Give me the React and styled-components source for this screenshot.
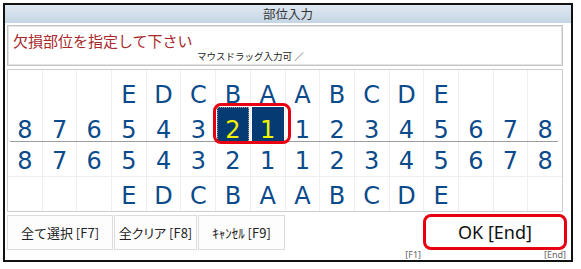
import React from 'react';
import styled, { createGlobalStyle } from 'styled-components';

const GlobalStyle = createGlobalStyle`
  html, body {
    margin: 0;
    padding: 0;
    background: #ffffff;
  }
  * {
    box-sizing: border-box;
  }
`;

const LEFT_LETTERS = ['', '', '', 'E', 'D', 'C', 'B', 'A'];
const RIGHT_LETTERS = ['A', 'B', 'C', 'D', 'E', '', '', ''];
const LEFT_NUMS = ['8', '7', '6', '5', '4', '3', '2', '1'];
const RIGHT_NUMS = ['1', '2', '3', '4', '5', '6', '7', '8'];

const rows = [
  { key: 'ul', pad: 11, height: 35, cells: [...LEFT_LETTERS, ...RIGHT_LETTERS] },
  { key: 'un', pad: 10, height: 35, cells: [...LEFT_NUMS, ...RIGHT_NUMS], divider: true },
  { key: 'ln', pad: 5, height: 34, cells: [...LEFT_NUMS, ...RIGHT_NUMS] },
  { key: 'll', pad: 5, height: 34, cells: [...LEFT_LETTERS, ...RIGHT_LETTERS], last: true },
];

// selected cells: upper row, 2 and 1 on the left side
const isSelected = (rowKey, idx) => rowKey === 'un' && (idx === 6 || idx === 7);

const App = () => {
  return (
    <>
      <GlobalStyle />
      <Window>
        <TitleBar>部位入力</TitleBar>
        <Body>
          <MessageBox>
            <Message>欠損部位を指定して下さい</Message>
            <Hint>マウスドラッグ入力可 ／</Hint>
          </MessageBox>

          <Board>
            {rows.map((row) => (
              <React.Fragment key={row.key}>
                <Row height={row.height} last={row.last || row.divider}>
                  {row.cells.map((c, i) => (
                    <Cell
                      key={i}
                      pad={row.pad}
                      selected={isSelected(row.key, i)}
                      focused={row.key === 'un' && i === 6}
                    >
                      {c}
                    </Cell>
                  ))}
                </Row>
                {row.divider && <Divider />}
              </React.Fragment>
            ))}
            <SelectionRing />
          </Board>
        </Body>

        <Actions>
          <ActionButton>全て選択 [F7]</ActionButton>
          <ActionButton narrow>全クリア [F8]</ActionButton>
          <ActionButton>ｷｬﾝｾﾙ [F9]</ActionButton>
          <span />
          <OkButton>OK [End]</OkButton>
          <span />
          <span />
          <span />
          <KeyLabel>[F1]</KeyLabel>
          <KeyLabel>[End]</KeyLabel>
        </Actions>
      </Window>
    </>
  );
};

const Window = styled.div`
  margin: 3px;
  width: 570px;
  height: 259px;
  border: 2px solid #111;
  background: #ffffff;
  display: flex;
  flex-direction: column;
  font-family: 'Noto Sans CJK JP', 'Noto Sans', sans-serif;
`;

const TitleBar = styled.div`
  height: 18px;
  line-height: 18px;
  text-align: center;
  font-size: 12.5px;
  color: #333;
  background: linear-gradient(#dfe8f2, #c5d5e4);
`;

const Body = styled.div`
  display: flex;
  flex-direction: column;
  padding: 2px 8px 0 2px;
  gap: 3px;
`;

const MessageBox = styled.div`
  height: 41px;
  border: 1px solid #c4c4c4;
  box-shadow: inset 0 0 0 1px #e4e4e4;
  padding: 6px 0 0 5px;
`;

const Message = styled.div`
  font-size: 15px;
  line-height: 18px;
  color: #a8282c;
`;

const Hint = styled.div`
  font-size: 9.5px;
  line-height: 12px;
  color: #222;
  padding-left: 184px;
`;

const Board = styled.div`
  position: relative;
  border: 1px solid #cdcdcd;
  background: #efefef;
  display: flex;
  flex-direction: column;
`;

const Row = styled.div`
  display: grid;
  grid-template-columns: repeat(16, 1fr);
  column-gap: 1px;
  height: ${(p) => p.height + (p.last ? 0 : 1)}px;
  ${(p) => !p.last && 'border-bottom: 1px solid #efefef;'}
`;

const Cell = styled.div`
  background: ${(p) => (p.selected ? '#053b73' : '#ffffff')};
  ${(p) => p.selected && 'box-shadow: inset 0 0 0 1px #ffffff;'}
  ${(p) => p.focused && 'outline: 1px dotted #9a9a9a; outline-offset: -2px;'}
  color: ${(p) => (p.selected ? '#f2f200' : '#0b4a8b')};
  font-family: 'DejaVu Sans', Verdana, sans-serif;
  font-size: 24px;
  line-height: 28px;
  text-align: center;
  padding-top: ${(p) => p.pad}px;
`;

const Divider = styled.div`
  height: 1px;
  margin: 0 4px 0 2px;
  background: #9c9c9c;
`;

const SelectionRing = styled.div`
  position: absolute;
  left: 205px;
  top: 33px;
  width: 78px;
  height: 41px;
  border: 3px solid #e60012;
  border-radius: 8px;
  pointer-events: none;
`;

const Actions = styled.div`
  display: grid;
  grid-template-columns: 106px 83px 87px 1fr 144px;
  grid-template-rows: 36px 10px;
  column-gap: 1px;
  padding: 2px 4px 0 2px;
`;

const ActionButton = styled.button`
  margin: 1px 0 0;
  height: 35px;
  border: 1px solid #dcdcdc;
  background: #fdfdfd;
  font-family: 'Noto Sans CJK JP', 'Noto Sans', sans-serif;
  font-size: 13px;
  color: #222;
  padding: 0;
  ${(p) => p.narrow && "font-feature-settings: 'palt';"}
`;

const OkButton = styled.button`
  height: 36px;
  border: 3px solid #e60012;
  border-radius: 8px;
  background: #ffffff;
  font-family: 'Noto Sans', 'Noto Sans CJK JP', sans-serif;
  font-size: 18px;
  color: #111;
  padding: 0;
`;

const KeyLabel = styled.span`
  text-align: right;
  font-family: 'Noto Sans', sans-serif;
  font-size: 9px;
  line-height: 10px;
  color: #666;
  padding-right: 1px;
`;

export default App;
